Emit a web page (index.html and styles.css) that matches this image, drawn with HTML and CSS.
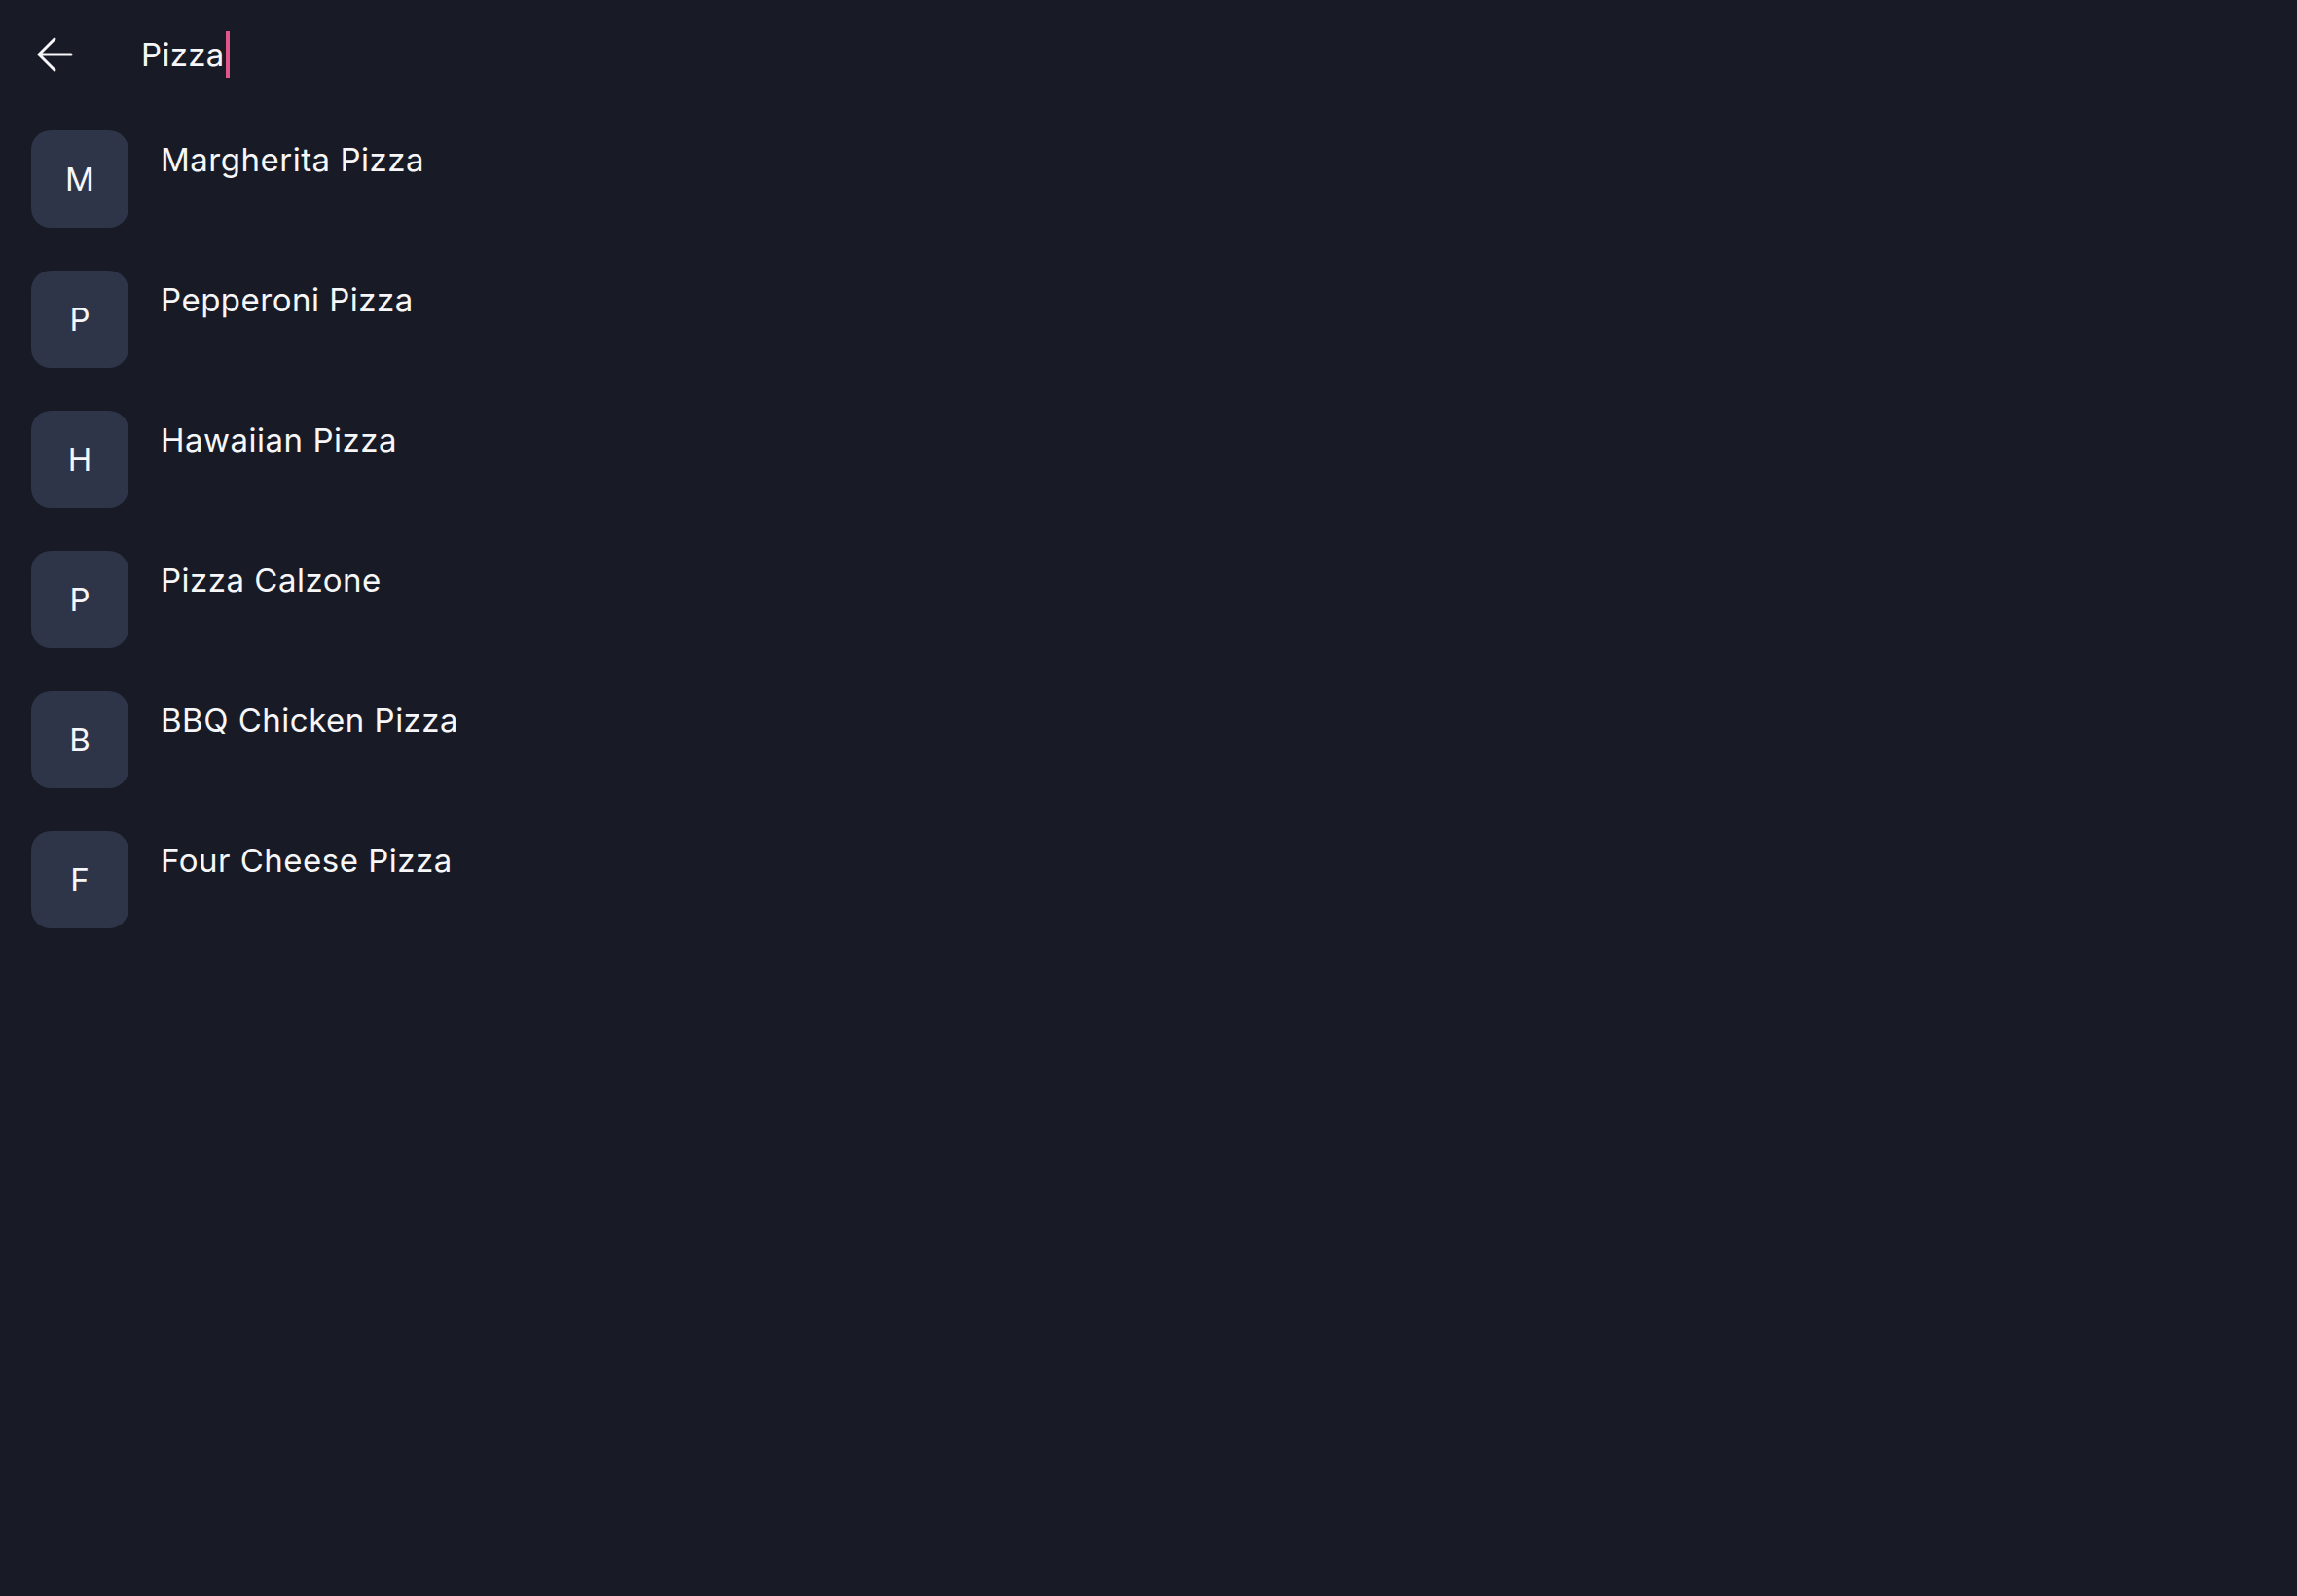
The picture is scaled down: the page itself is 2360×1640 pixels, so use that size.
FILE: index.html
```html
<!DOCTYPE html>
<html lang="en">
<head>
<meta charset="utf-8">
<title>Search</title>
<link rel="stylesheet" href="styles.css">
</head>
<body>
<div class="app">
  <header class="search-bar">
    <button class="back" aria-label="Back">
      <svg viewBox="0 0 40 40" width="40" height="40" fill="none" stroke="currentColor" stroke-width="3" stroke-linecap="round" stroke-linejoin="round"><path d="M37 20H4M20 4L4 20L20 36"/></svg>
    </button>
    <div class="query"><span class="query-text">Pizza</span><span class="caret"></span></div>
  </header>
  <ul class="results">
    <li class="result"><span class="avatar">M</span><span class="title">Margherita Pizza</span></li>
    <li class="result"><span class="avatar">P</span><span class="title">Pepperoni Pizza</span></li>
    <li class="result"><span class="avatar">H</span><span class="title">Hawaiian Pizza</span></li>
    <li class="result"><span class="avatar">P</span><span class="title">Pizza Calzone</span></li>
    <li class="result"><span class="avatar">B</span><span class="title">BBQ Chicken Pizza</span></li>
    <li class="result"><span class="avatar">F</span><span class="title">Four Cheese Pizza</span></li>
  </ul>
</div>
</body>
</html>
```

FILE: styles.css
```css
html, body {
  margin: 0;
  padding: 0;
  background: #181b26;
  height: 100%;
}
body {
  font-family: Inter, "Noto Sans", sans-serif;
  color: #f7f7f9;
}
.app {
  min-height: 100%;
}
.search-bar {
  display: flex;
  align-items: center;
  height: 112px;
  padding-left: 36px;
}
.back {
  display: flex;
  width: 40px;
  height: 40px;
  padding: 0;
  border: 0;
  background: none;
  color: #f7f7f9;
}
.query {
  display: flex;
  align-items: center;
  margin-left: 69px;
  font-size: 33px;
  line-height: 48px;
  height: 48px;
  letter-spacing: 0.3px;
}
.caret {
  display: block;
  width: 4px;
  height: 48px;
  margin-left: 1px;
  background: #e0568a;
}
.results {
  list-style: none;
  margin: 0;
  padding: 22px 0 0 32px;
  display: flex;
  flex-direction: column;
  gap: 44px;
}
.result {
  display: flex;
  align-items: flex-start;
  gap: 33px;
}
.avatar {
  display: flex;
  align-items: center;
  justify-content: center;
  width: 100px;
  height: 100px;
  border-radius: 20px;
  background: #2e3549;
  font-size: 33px;
  font-weight: 400;
}
.title {
  padding-top: 6px;
  font-size: 33px;
  line-height: 48px;
  font-weight: 400;
  letter-spacing: 0.5px;
}
```
